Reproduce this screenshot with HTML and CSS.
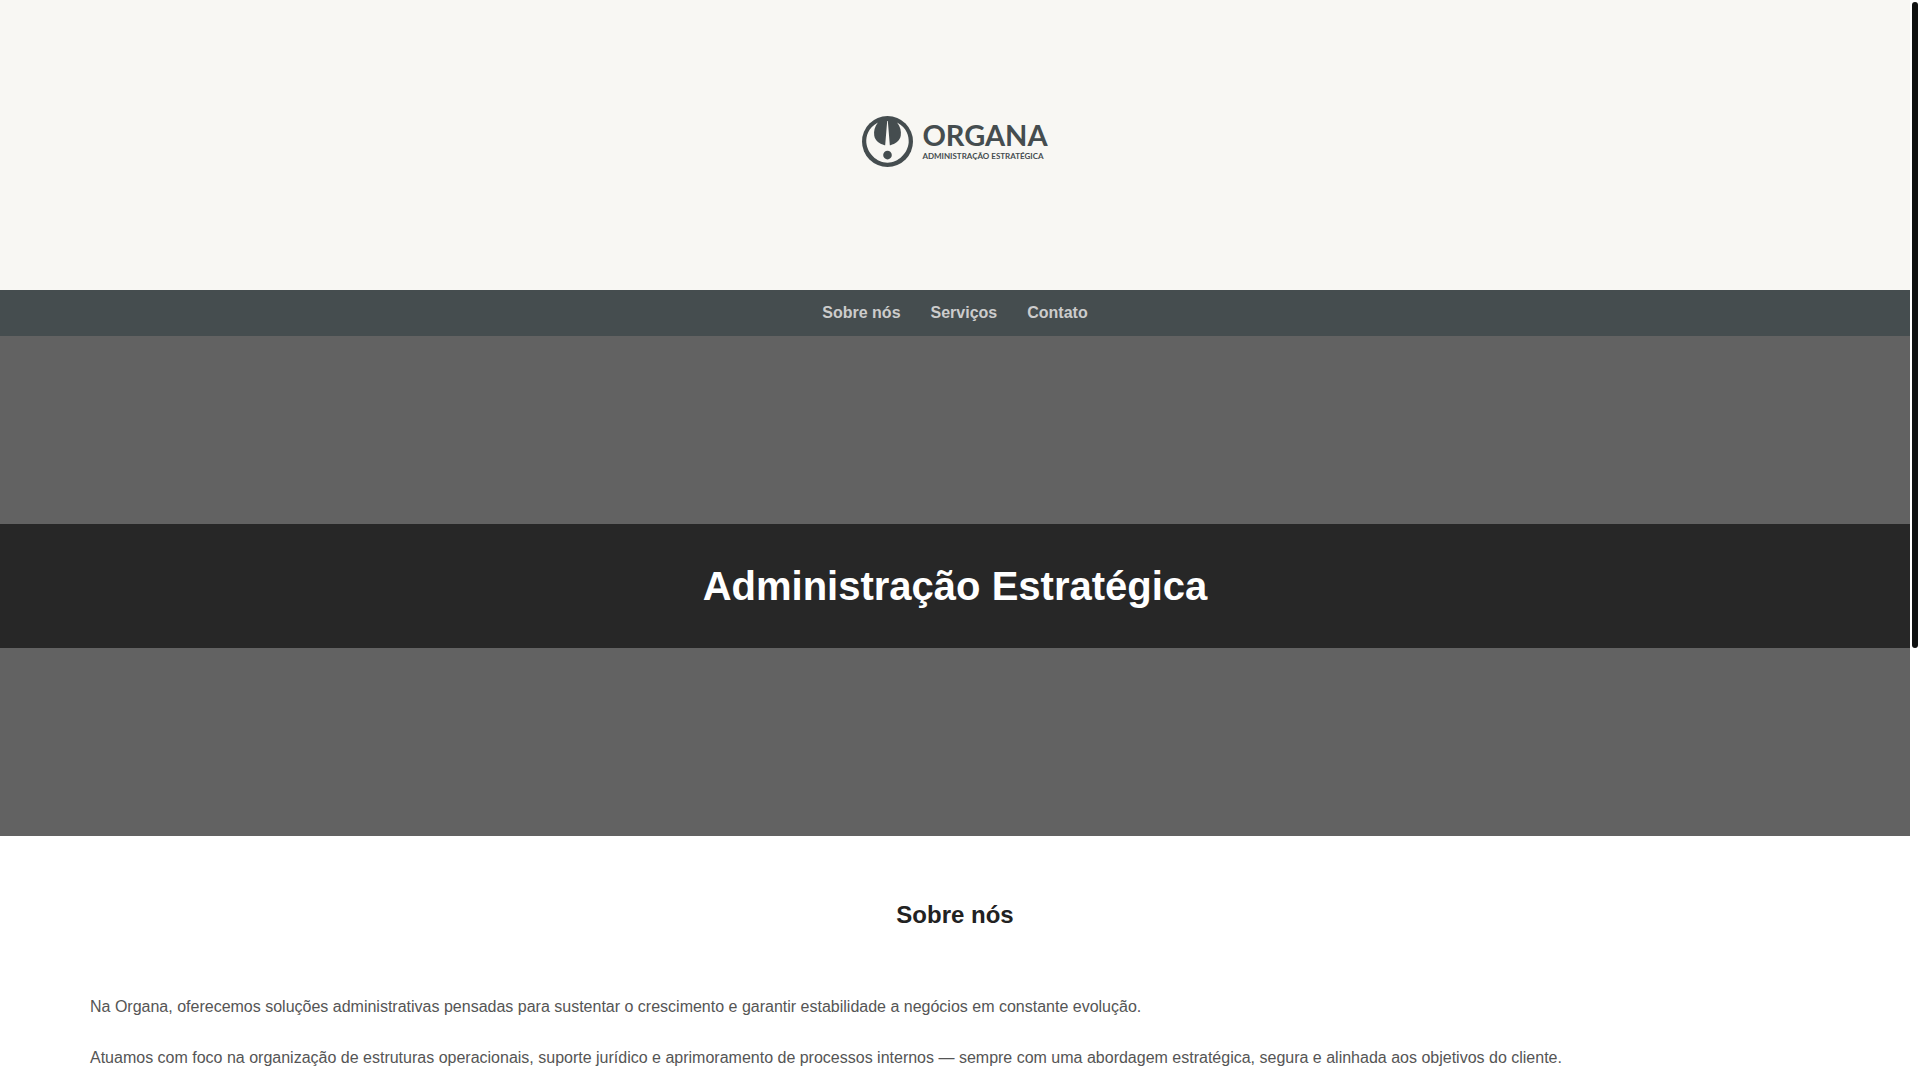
FILE: index.html
```html
<!DOCTYPE html>
<html lang="pt-BR">
  <head>
    <meta charset="UTF-8" />
    <meta name="viewport" content="width=device-width, initial-scale=1.0" />
    <title>Organa</title>
    <link rel="stylesheet" href="styles.css">
  </head>
  <body>
    <main class="page">
      <header class="header">
        <div class="logo">
          <svg class="logo-mark" viewBox="0 0 154 154" aria-hidden="true">
            <circle cx="77" cy="77" r="77" fill="#454d4f" />
            <path d="M48 20 C18 36 12 62 13 80 C16 112 44 141 77 141 C110 141 138 112 141 80 C142 62 136 36 106 20 C116 34 119 46 117 60 C114 76 100 85 86 88 L84 88 L78 15 L76 15 L70 88 L68 88 C54 85 40 76 37 60 C35 46 38 34 48 20 Z" fill="#f8f7f3" />
            <circle cx="77" cy="118" r="13" fill="#454d4f" />
          </svg>
          <div class="logo-text">
            <span class="logo-name">ORGANA</span>
            <span class="logo-sub">ADMINISTRAÇÃO ESTRATÉGICA</span>
          </div>
        </div>
      </header>

      <nav class="nav">
        <a href="#sobre">Sobre nós</a>
        <a href="#servicos">Serviços</a>
        <a href="#contato">Contato</a>
      </nav>

      <section class="hero">
        <h1>Administração Estratégica</h1>
      </section>

      <section class="sobre" id="sobre">
        <h2>Sobre nós</h2>
        <p>Na Organa, oferecemos soluções administrativas pensadas para sustentar o crescimento e garantir estabilidade a negócios em constante evolução.</p>
        <p>Atuamos com foco na organização de estruturas operacionais, suporte jurídico e aprimoramento de processos internos — sempre com uma abordagem estratégica, segura e alinhada aos objetivos do cliente.</p>
      </section>
    </main>

    <div class="scrollbar" aria-hidden="true">
      <div class="scrollbar-thumb"></div>
    </div>
  </body>
</html>
```
FILE: styles.css
```css
* {
  margin: 0;
  padding: 0;
  box-sizing: border-box;
}
html {
  scrollbar-width: none;
}
body {
  display: flex;
  align-items: flex-start;
  font-family: "Liberation Sans", Arial, sans-serif;
  font-size: 16px;
  line-height: 26px;
  color: #555;
  background: #fff;
  text-rendering: optimizeSpeed;
}
.page {
  flex: 1;
}
.scrollbar {
  position: sticky;
  top: 0;
  width: 10px;
  height: 100vh;
  padding: 2px;
  background: #fff;
}
.scrollbar-thumb {
  height: 60%;
  background: #0f1111;
  border-radius: 3px;
}
.header {
  display: flex;
  justify-content: center;
  align-items: center;
  height: 290px;
  padding-bottom: 8px;
  background: #f8f7f3;
}
.logo {
  display: flex;
  align-items: center;
  gap: 9px;
  color: #454d4f;
  font-family: Lato, sans-serif;
}
.logo-mark {
  width: 51px;
  height: 51px;
}
.logo-text {
  display: flex;
  flex-direction: column;
  padding-top: 2px;
}
.logo-name {
  font-size: 29px;
  font-weight: 700;
  line-height: 28px;
}
.logo-sub {
  font-size: 8px;
  font-weight: 700;
  line-height: 14px;
}
.nav {
  display: flex;
  justify-content: center;
  gap: 30px;
  padding: 10px;
  background: #454d4f;
}
.nav a {
  color: #ccc;
  font-weight: bold;
  text-decoration: none;
}
.hero {
  display: flex;
  align-items: center;
  height: 500px;
  background: #626262;
}
.hero h1 {
  width: 100%;
  padding: 30px;
  font-size: 40px;
  line-height: 64px;
  color: #fff;
  text-align: center;
  background: #272727;
}
.sobre {
  padding: 60px 90px 8px;
}
.sobre h2 {
  margin-bottom: 60px;
  font-size: 24px;
  line-height: 38px;
  color: #222;
  text-align: center;
}
.sobre p + p {
  margin-top: 25px;
}
```
